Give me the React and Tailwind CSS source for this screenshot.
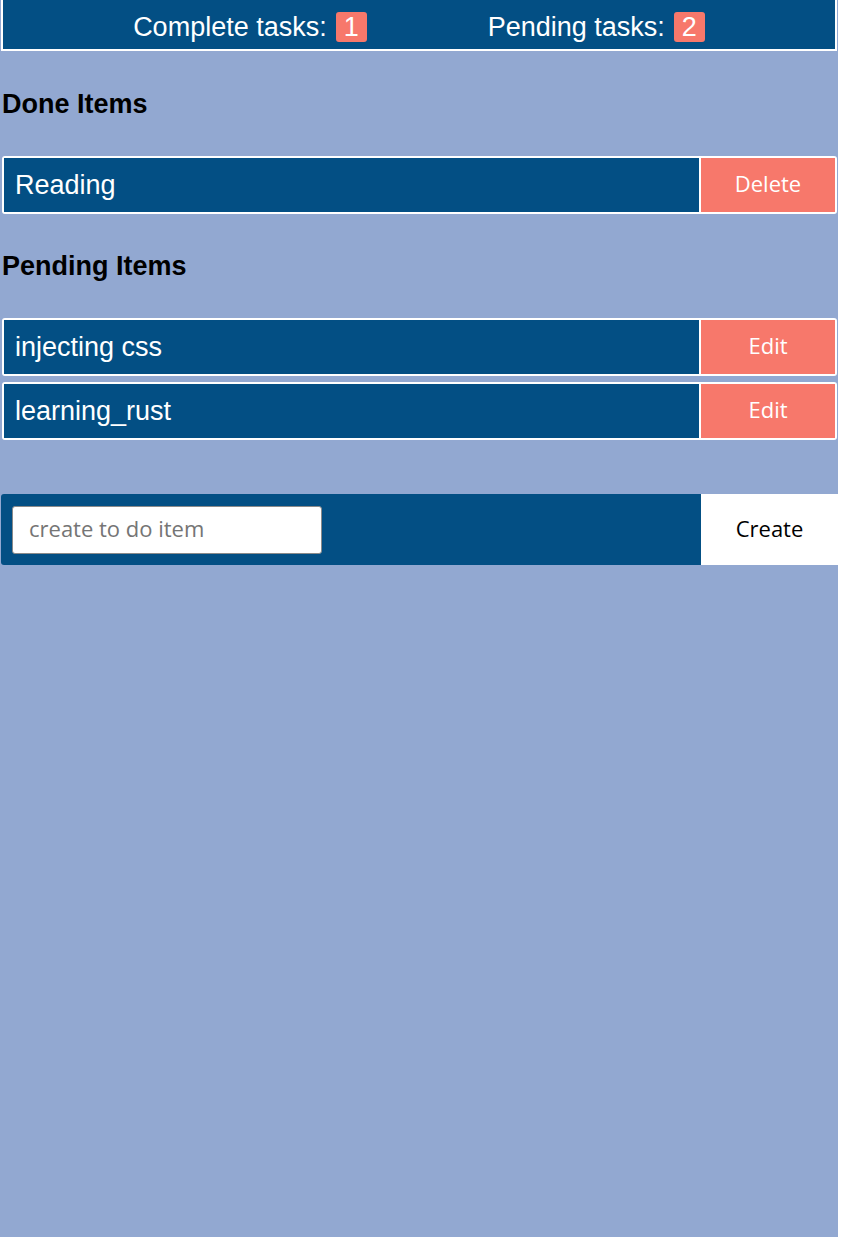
export default function App() {
  const sans = { fontFamily: '"Liberation Sans", Arial, sans-serif' };
  const btnFont = '[font-family:"Open_Sans",sans-serif]';
  const Row = ({ title, action }) => (
    <div className="ml-[2px] flex h-[58px] w-[835px] gap-[2px] rounded-[3px] border-2 border-white bg-white">
      <div className="flex flex-1 items-center bg-[#034f84] pl-[11px] text-[27px] leading-[31px] text-white">
        {title}
      </div>
      <button className={`w-[134px] bg-[#f7786b] pb-[4px] text-[22px] text-white ${btnFont}`}>
        {action}
      </button>
    </div>
  );
  return (
    <div className="h-[1237px] w-[838px] bg-[#92a8d1]" style={sans}>
      <div className="mx-[1px] flex h-[51px] items-center justify-center gap-[121px] border-2 border-t-0 border-white bg-[#034f84] pt-[5px] text-[27px] leading-[30px] text-white">
        <div className="flex items-center">
          <span>Complete tasks:</span>
          <span className="ml-[9px] rounded-[3px] bg-[#f7786b] px-[8px] leading-[30px]">1</span>
        </div>
        <div className="flex items-center">
          <span>Pending tasks:</span>
          <span className="ml-[9px] rounded-[3px] bg-[#f7786b] px-[8px] leading-[30px]">2</span>
        </div>
      </div>

      <h2 className="mb-[36px] ml-[2px] mt-[38px] text-[27px] font-bold leading-[31px] text-black">Done Items</h2>
      <Row title="Reading" action="Delete" />

      <h2 className="mb-[36px] ml-[2px] mt-[37px] text-[27px] font-bold leading-[31px] text-black">Pending Items</h2>
      <div className="flex flex-col gap-[6px]">
        <Row title="injecting css" action="Edit" />
        <Row title="learning_rust" action="Edit" />
      </div>

      <div className="ml-[1px] mt-[54px] flex h-[71px] w-[837px]">
        <div className="flex flex-1 items-center rounded-l-[3px] bg-[#034f84] pl-[11px]">
          <input
            placeholder="create to do item"
            className={`h-[48px] w-[310px] rounded-[3px] border border-[#8a8a8a] bg-white px-[16px] pb-[4px] text-[22px] text-black placeholder:text-[#757575] outline-none ${btnFont}`}
          />
        </div>
        <button className={`w-[137px] bg-white pb-[3px] text-[22px] text-black ${btnFont}`}>Create</button>
      </div>
    </div>
  );
}
